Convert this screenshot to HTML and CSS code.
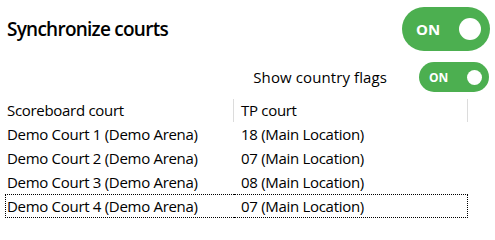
FILE: index.html
```html
<!DOCTYPE html>
<html>
<head>
<meta charset="utf-8">
<link rel="stylesheet" href="styles.css">
</head>
<body>
<div class="page">
  <div class="top">
    <div class="title">Synchronize courts</div>
    <div class="toggle big"><span class="on">ON</span><span class="knob"></span></div>
  </div>
  <div class="flags">
    <span class="flags-label">Show country flags</span>
    <div class="toggle small"><span class="on">ON</span><span class="knob"></span></div>
  </div>
  <div class="grid">
    <div class="head">Scoreboard court</div>
    <div class="head">TP court</div>
    <div class="row"><div class="cell c1">Demo Court 1 (Demo Arena)</div><div class="cell">18 (Main Location)</div></div>
    <div class="row"><div class="cell c1">Demo Court 2 (Demo Arena)</div><div class="cell">07 (Main Location)</div></div>
    <div class="row"><div class="cell c1">Demo Court 3 (Demo Arena)</div><div class="cell">08 (Main Location)</div></div>
    <div class="row focus"><div class="cell c1">Demo Court 4 (Demo Arena)</div><div class="cell">07 (Main Location)</div></div>
  </div>
</div>
</body>
</html>
```
FILE: styles.css
```css
html, body {
  margin: 0;
  padding: 0;
  background: #ffffff;
}
body {
  font-family: "Open Sans", "Noto Sans", sans-serif;
  color: #000;
  width: 495px;
  height: 224px;
  overflow: hidden;
}
.page {
  display: flex;
  flex-direction: column;
}
.top {
  display: flex;
  justify-content: space-between;
  align-items: center;
  padding: 7px 5px 0 7px;
}
.title {
  font-size: 19px;
  font-weight: 600;
  letter-spacing: -0.75px;
}
.toggle {
  background: #4caf50;
  border-radius: 999px;
  display: flex;
  align-items: center;
  justify-content: space-between;
  color: #fff;
  font-weight: 700;
  box-sizing: border-box;
}
.toggle.big {
  width: 88px;
  height: 44px;
  padding: 0 9px 0 14px;
  font-size: 15px;
}
.toggle.big .knob {
  width: 22px;
  height: 22px;
}
.toggle.small {
  width: 70px;
  height: 30px;
  padding: 0 7px 0 10px;
  font-size: 12px;
}
.toggle.small .knob {
  width: 15px;
  height: 15px;
}
.knob {
  background: #fff;
  border-radius: 50%;
}
.flags {
  display: flex;
  justify-content: flex-end;
  align-items: center;
  gap: 32px;
  margin-top: 11px;
  padding-right: 6px;
}
.flags-label {
  font-size: 15px;
  letter-spacing: 0.1px;
}
.grid {
  display: grid;
  grid-template-columns: 229px 234px;
  margin: 6px 0 0 5px;
  font-size: 15px;
  letter-spacing: -0.3px;
}
.head {
  height: 24px;
  line-height: 24px;
  padding-left: 2px;
  position: relative;
}
.head::after {
  content: "";
  position: absolute;
  right: 0;
  top: 1px;
  bottom: 0;
  width: 1px;
  background: #dcdcdc;
}
.head:nth-child(2) {
  padding-left: 7px;
}
.row {
  display: contents;
}
.cell {
  height: 24px;
  line-height: 24px;
  padding-left: 7px;
  box-sizing: border-box;
  white-space: nowrap;
}
.cell.c1 {
  padding-left: 2px;
}
.row.focus .cell {
  border-top: 1px dotted #000;
  border-bottom: 1px dotted #000;
  line-height: 22px;
}
.row.focus .cell.c1 {
  border-left: 1px dotted #000;
  padding-left: 1px;
}
.row.focus .cell:last-child {
  border-right: 1px dotted #000;
}
```
